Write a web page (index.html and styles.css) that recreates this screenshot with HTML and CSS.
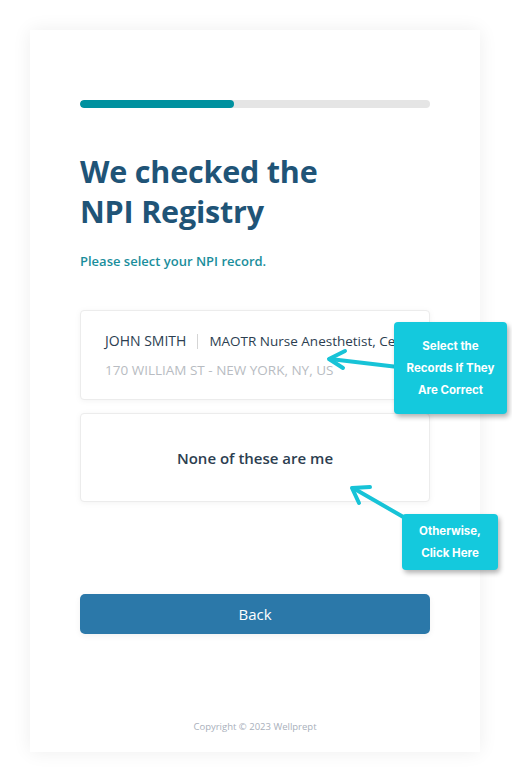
FILE: index.html
```html
<!DOCTYPE html>
<html>
<head>
<meta charset="utf-8">
<link rel="stylesheet" href="styles.css">
</head>
<body>
<div class="page">
  <main class="card">
    <div class="progress"><div class="progress-fill" style="width:44%"></div></div>
    <h1 class="title">We checked the<br>NPI Registry</h1>
    <p class="subtitle">Please select your NPI record.</p>
    <div class="records">
      <div class="record">
        <div class="record-top"><span class="name">JOHN SMITH</span><span class="sep"></span><span class="spec">MAOTR Nurse Anesthetist, Certified Registered</span></div>
        <div class="address">170 WILLIAM ST - NEW YORK, NY, US</div>
      </div>
      <div class="record none">None of these are me</div>
    </div>
    <button class="back">Back</button>
    <footer class="copy">Copyright © 2023 Wellprept</footer>
  </main>
  <svg class="arrows" width="512" height="780" viewBox="0 0 512 780">
    <g stroke="#17c3d7" stroke-width="4" stroke-linecap="round" stroke-linejoin="round" fill="none">
      <path d="M398 367 L330 359"/>
      <path d="M345 351 L329 359 L343 368"/>
      <path d="M412 522 L353 488"/>
      <path d="M370 487 L352 488 L359 503"/>
    </g>
  </svg>
  <div class="callout c1">Select the<br>Records If They<br>Are Correct</div>
  <div class="callout c2">Otherwise,<br>Click Here</div>
</div>
</body>
</html>
```
FILE: styles.css
```css
* { box-sizing: border-box; }
html, body { margin: 0; padding: 0; background: #fff; }
body { font-family: "Open Sans", "Noto Sans", sans-serif; }
.page { position: relative; width: 512px; height: 780px; padding: 30px 32px 28px 30px; }
.card {
  width: 450px; height: 722px; background: #fff;
  box-shadow: 0 0 18px rgba(0,0,0,0.07);
  padding: 70px 50px 0 50px;
  display: flex; flex-direction: column;
}
.progress { height: 8px; background: #e5e5e5; border-radius: 4px; overflow: hidden; }
.progress-fill { height: 100%; background: #00919f; border-radius: 4px; }
.title {
  margin: 43px 0 0; font-size: 30.5px; line-height: 40px; font-weight: 700;
  color: #1f5477; letter-spacing: -0.2px;
}
.subtitle { margin: 21px 0 0; font-size: 13px; line-height: 18px; font-weight: 600; color: #1a8e9c; }
.records { margin-top: 40px; display: flex; flex-direction: column; gap: 13px; }
.record {
  background: #fff; border: 1px solid #ececec; border-radius: 4px;
  box-shadow: 0 1px 6px rgba(0,0,0,0.05);
  height: 90px; padding: 20px 24px 0; overflow: hidden; white-space: nowrap;
}
.record-top { display: flex; align-items: center; font-size: 13.5px; line-height: 20px; }
.name { color: #2c3e50; font-weight: 500; font-size: 14px; flex-shrink: 0; }
.sep { width: 1px; height: 15px; background: #d5d5d5; margin: 0 11px; flex-shrink: 0; }
.spec { color: #2c3e50; flex-shrink: 0; }
.address { margin-top: 9px; font-size: 13.5px; line-height: 20px; color: #b8bcc2; }
.record.none {
  height: 89px; padding: 0; display: flex; align-items: center; justify-content: center;
  font-size: 15px; font-weight: 600; color: #2c3e50;
}
.back {
  margin-top: 92px; height: 40px; border: 0; border-radius: 5px; background: #2b78a9;
  color: #fff; font-family: "Open Sans", sans-serif; font-size: 15px;
  box-shadow: 0 2px 6px rgba(0,0,0,0.06);
}
.copy { margin-top: 86px; text-align: center; font-size: 9.5px; color: #a9b0bb; }
.arrows { position: absolute; left: 0; top: 0; pointer-events: none; }
.callout {
  position: absolute; background: #14c9dd; color: #fff; border-radius: 4px;
  font-family: "Inter", "Lato", sans-serif; font-weight: 700; font-size: 11.5px; line-height: 22px;
  text-align: center; box-shadow: 2px 3px 5px rgba(0,0,0,0.3);
  display: flex; align-items: center; justify-content: center;
}
.c1 { left: 394px; top: 322px; width: 113px; height: 92px; }
.c2 { left: 402px; top: 514px; width: 96px; height: 56px; }
```
